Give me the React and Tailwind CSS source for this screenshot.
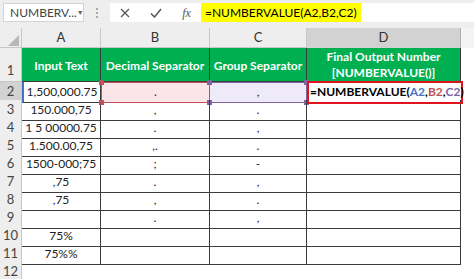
import React from "react";

const rows = [
  ["1,500,000.75", ".", ","],
  ["150.000,75", ",", "."],
  ["1 5 00000.75", ".", ","],
  ["1.500.00,75", ",.", "."],
  ["1500-000;75", ";", "-"],
  [",75", ".", ","],
  [",75", ",", "."],
  ["", ".", ","],
  ["75%", "", ""],
  ["75%%", "", ""],
];

const cols = "grid grid-cols-[22px_79px_109px_97px_154px_1fr]";

export default function App() {
  return (
    <div className="w-[474px] h-[279px] overflow-hidden bg-white text-[#222] font-['Lato',sans-serif]">
      {/* formula bar */}
      <div className="h-[28px] bg-[#eeeeee] flex items-start pt-[3px] pl-[3px]">
        <div className="w-[81px] h-[19px] bg-white border border-[#d4d4d4] flex items-center justify-between pl-[6px] pr-[4px] text-[12px] text-[#444]">
          <span>NUMBERV...</span>
          <span className="text-[7px] text-[#666]">▼</span>
        </div>
        <div className="w-[26px] h-[19px] flex flex-col items-center justify-center gap-[2px]">
          <span className="w-[2px] h-[2px] bg-[#aaa]" />
          <span className="w-[2px] h-[2px] bg-[#aaa]" />
          <span className="w-[2px] h-[2px] bg-[#aaa]" />
        </div>
        <div className="w-[91px] h-[19px] bg-white flex items-center justify-around text-[#666]">
          <svg width="10" height="10" viewBox="0 0 10 10">
            <path d="M1 1L9 9M9 1L1 9" stroke="#555" strokeWidth="1.2" />
          </svg>
          <svg width="12" height="10" viewBox="0 0 12 10">
            <path d="M1 5.5L4.5 9L11 1" stroke="#555" strokeWidth="1.5" fill="none" />
          </svg>
          <span className="font-['Liberation_Serif',serif] italic text-[12px] text-[#555]">fx</span>
        </div>
        <div className="flex-1 h-[19px] bg-white flex items-center">
          <span className="h-[19px] bg-[#ffff00] flex items-center px-[4px] text-[12px] text-black">
            =NUMBERVALUE(A2,B2,C2)
          </span>
        </div>
      </div>

      {/* column headers */}
      <div className={`${cols} h-[20px] bg-[#eeeeee] text-[13px] text-[#333] border-b border-[#c8c8c8]`}>
        <div className="flex items-end justify-end p-[2px] border-r border-[#c8c8c8]">
          <svg width="11" height="11" viewBox="0 0 11 11">
            <path d="M11 0V11H0Z" fill="#b8b8b8" />
          </svg>
        </div>
        {["A", "B", "C"].map((c) => (
          <div key={c} className="flex items-center justify-center border-r border-[#c8c8c8]">
            {c}
          </div>
        ))}
        <div className="flex items-center justify-center bg-[#d2d2d2] border-r border-[#b0b0b0]">D</div>
        <div className="bg-[#f4f4f4]" />
      </div>

      {/* row 1 headers */}
      <div className={`${cols} h-[34px] text-[12px]`}>
        <div className="bg-[#eeeeee] flex items-end justify-center pb-[1px] text-[13px] text-[#444] border-r border-b border-[#c8c8c8]">1</div>
        <div className="bg-[#00b050] text-white font-bold flex items-center justify-center pt-[2px] border-r border-b border-[#3c3c3c]">Input Text</div>
        <div className="bg-[#00b050] text-white font-bold flex items-center justify-center pt-[2px] border-r border-b border-[#3c3c3c] whitespace-nowrap">Decimal Separator</div>
        <div className="bg-[#00b050] text-white font-bold flex items-center justify-center pt-[2px] border-r border-b border-[#3c3c3c] whitespace-nowrap">Group Separator</div>
        <div className="bg-[#00b050] text-white font-bold flex flex-col items-center justify-center leading-[16px] border-r border-b border-[#3c3c3c]">
          <span>Final Output Number</span>
          <span>[NUMBERVALUE()]</span>
        </div>
        <div />
      </div>

      {/* data rows */}
      {rows.map((r, i) => {
        const n = i + 2;
        const first = i === 0;
        return (
          <div key={n} className={`${cols} h-[18px] text-[12px]`}>
            <div className={`flex items-center justify-center border-r border-b border-[#c8c8c8] text-[13px] text-[#444] ${first ? "bg-[#d2d2d2]" : "bg-[#eeeeee]"}`}>
              {n}
            </div>
            <div className={`flex items-center justify-center border-r border-b border-[#3c3c3c] ${first ? "border-l-2 border-l-[#4472c4]" : ""}`}>
              {r[0]}
            </div>
            <div className={`relative flex items-center justify-center border-r border-b ${first ? "bg-[#fbe5e8] border-[#c0505a] border-t border-l" : "border-[#3c3c3c]"}`}>
              {r[1]}
              {first && (
                <>
                  <span className="absolute -left-[3px] -top-[3px] w-[5px] h-[5px] bg-[#c0505a]" />
                  <span className="absolute -left-[3px] -bottom-[3px] w-[5px] h-[5px] bg-[#c0505a]" />
                </>
              )}
            </div>
            <div className={`relative flex items-center justify-center border-r border-b ${first ? "bg-[#eeeaf7] border-[#8064a2] border-t" : "border-[#3c3c3c]"}`}>
              {r[2]}
              {first && (
                <>
                  <span className="absolute -left-[3px] -top-[3px] w-[5px] h-[5px] bg-[#8064a2]" />
                  <span className="absolute -left-[3px] -bottom-[3px] w-[5px] h-[5px] bg-[#8064a2]" />
                  <span className="absolute -right-[3px] -top-[3px] w-[5px] h-[5px] bg-[#8064a2]" />
                  <span className="absolute -right-[3px] -bottom-[3px] w-[5px] h-[5px] bg-[#8064a2]" />
                </>
              )}
            </div>
            {first ? (
              <div className="relative z-10 -my-[1px] -mr-[2px] flex items-center pl-[1px] border-2 border-[#e0141e] font-bold text-[12px] whitespace-nowrap text-black">
                =NUMBERVALUE(<span className="text-[#4472c4]">A2</span>,<span className="text-[#c0504d]">B2</span>,<span className="text-[#8064a2]">C2</span>)
              </div>
            ) : (
              <div className="border-r border-b border-[#3c3c3c]" />
            )}
            <div />
          </div>
        );
      })}

      {/* row 12 */}
      <div className={`${cols} h-[18px]`}>
        <div className="bg-[#eeeeee] flex items-center justify-center text-[13px] text-[#444] border-r border-[#c8c8c8]">12</div>
      </div>
    </div>
  );
}
